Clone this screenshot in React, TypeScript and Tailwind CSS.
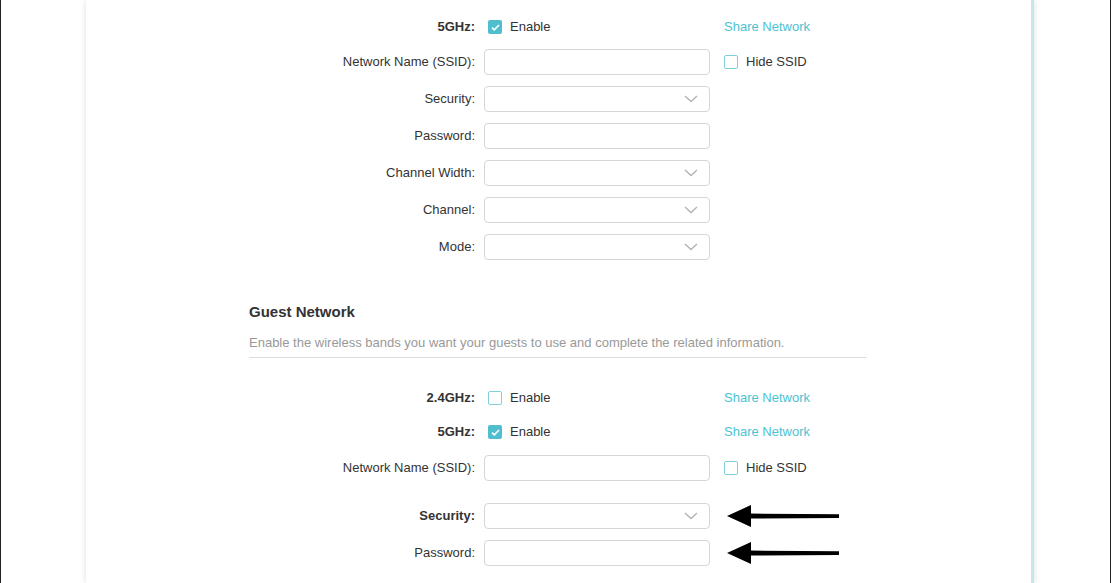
import React from 'react';

const font = { fontFamily: '"Liberation Sans", Arial, sans-serif' };

const Chevron = () => (
  <svg width="14" height="8" viewBox="0 0 14 8" className="absolute right-[11px] top-1/2 -translate-y-1/2">
    <path d="M1 1l6 5.5L13 1" fill="none" stroke="#b3b3b3" strokeWidth="1.4" />
  </svg>
);

const Arrow = () => (
  <svg width="114" height="24" viewBox="0 0 114 24" className="ml-[17px]">
    <path d="M0 12L24 1V9.6L112 10.2V14L24 14.5V23Z" fill="#000" />
  </svg>
);

const Checkbox = ({ checked }: { checked?: boolean }) =>
  checked ? (
    <span className="flex h-[14px] w-[14px] items-center justify-center rounded-[2px] bg-[#4fbfd0]">
      <svg width="9" height="7" viewBox="0 0 9 7">
        <path d="M1 3.6l2.3 2.2L8 1" fill="none" stroke="#fff" strokeWidth="1.6" />
      </svg>
    </span>
  ) : (
    <span className="h-[14px] w-[14px] rounded-[2px] border border-[#7fd0dc] bg-white" />
  );

const Label = ({ text, bold }: { text: string; bold?: boolean }) => (
  <div className={`w-[226px] shrink-0 text-right text-[13px] text-[#333] ${bold ? 'font-bold' : ''}`}>{text}</div>
);

const Input = ({ select }: { select?: boolean }) => (
  <div className="relative ml-[9px] h-[26px] w-[226px] shrink-0 rounded-[4px] border border-[#d6d6d6] bg-white">
    {select && <Chevron />}
  </div>
);

const EnableRow = ({ band, checked, className = '' }: { band: string; checked?: boolean; className?: string }) => (
  <div className={`flex h-[26px] items-center ${className}`}>
    <Label text={band} bold />
    <div className="ml-[13px] flex w-[236px] items-center gap-[8px]">
      <Checkbox checked={checked} />
      <span className="text-[13px] text-[#333]">Enable</span>
    </div>
    <span className="text-[13px] text-[#4cc3d3]">Share Network</span>
  </div>
);

const SsidRow = ({ className = '' }: { className?: string }) => (
  <div className={`flex h-[26px] items-center ${className}`}>
    <Label text="Network Name (SSID):" />
    <Input />
    <div className="ml-[14px] flex items-center gap-[8px]">
      <Checkbox />
      <span className="text-[13px] text-[#333]">Hide SSID</span>
    </div>
  </div>
);

const FieldRow = ({ label, select, bold, arrow, className = '' }: { label: string; select?: boolean; bold?: boolean; arrow?: boolean; className?: string }) => (
  <div className={`flex h-[26px] items-center ${className}`}>
    <Label text={label} bold={bold} />
    <Input select={select} />
    {arrow && <Arrow />}
  </div>
);

export default function App() {
  return (
    <div className="flex h-[583px] w-full overflow-hidden border-x border-[#222] bg-white" style={font}>
      <div className="ml-[85px] h-full w-[948px] border-r-[3px] border-[#c4e7ef] bg-white pl-[163px] pt-[14px] shadow-[0_0_6px_rgba(0,0,0,0.14)]">
        <EnableRow band="5GHz:" checked />
        <SsidRow className="mt-[9px]" />
        <FieldRow label="Security:" select className="mt-[11px]" />
        <FieldRow label="Password:" className="mt-[11px]" />
        <FieldRow label="Channel Width:" select className="mt-[11px]" />
        <FieldRow label="Channel:" select className="mt-[11px]" />
        <FieldRow label="Mode:" select className="mt-[11px]" />

        <h2 className="mt-[42px] text-[15px] font-bold leading-[20px] text-[#333]">Guest Network</h2>
        <div className="mt-[12px] w-[618px] border-b border-[#dedede] pb-[5px] text-[13px] leading-[18px] text-[#999]">
          Enable the wireless bands you want your guests to use and complete the related information.
        </div>

        <EnableRow band="2.4GHz:" className="mt-[27px]" />
        <EnableRow band="5GHz:" checked className="mt-[8px]" />
        <SsidRow className="mt-[10px]" />
        <FieldRow label="Security:" select bold arrow className="mt-[22px]" />
        <FieldRow label="Password:" arrow className="mt-[11px]" />
      </div>
    </div>
  );
}
